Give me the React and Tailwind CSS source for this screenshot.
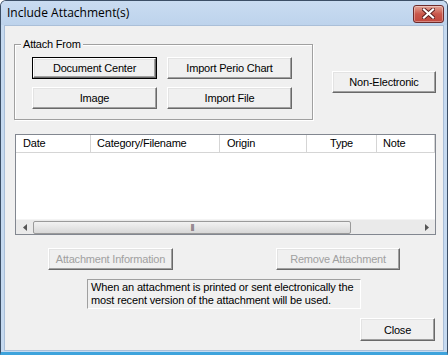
import React from "react";

const font = { fontFamily: '"Liberation Sans", Arial, sans-serif' };

const Btn = ({ children, className = "", disabled, isDefault }) => (
  <div className={`${isDefault ? "border border-black" : ""} ${className}`}>
    <div
      className={`w-full h-full flex items-center justify-center whitespace-nowrap bg-[#f0f0f0] border border-t-white border-l-white border-r-[#696969] border-b-[#696969] shadow-[inset_-1px_-1px_0_#a0a0a0,inset_1px_1px_0_#e3e3e3] text-[11px] tracking-[-0.2px] leading-none pt-[1px] ${disabled ? "text-[#a0a0a0]" : "text-black"}`}
    >
      {children}
    </div>
  </div>
);

const cols = [
  { label: "Date", w: "w-[75px]", align: "pl-[7px]" },
  { label: "Category/Filename", w: "w-[129px]", align: "pl-[6px]" },
  { label: "Origin", w: "w-[87px]", align: "pl-[7px]" },
  { label: "Type", w: "w-[70px]", align: "justify-center" },
  { label: "Note", w: "flex-1", align: "pl-[6px]" },
];

export default function App() {
  return (
    <div
      style={font}
      className="w-[448px] h-[355px] flex flex-col bg-[#c6daf0] border border-[#3c4f66] rounded-t-[6px] overflow-hidden border-b-[3px] border-b-[#3ea3dc]"
    >
      {/* title bar */}
      <div className="h-[24px] flex items-center justify-between pl-[6px] pr-[3px] bg-gradient-to-b from-[#c9dcf1] to-[#bdd3ec]">
        <span className="text-[12px] text-black" style={{ fontFamily: '"Open Sans", "Liberation Sans", sans-serif' }}>
          Include Attachment(s)
        </span>
        <div className="w-[31px] h-[18px] mt-[1px] rounded-[3px] border border-[#6d2b2b] bg-gradient-to-b from-[#e2a496] via-[#c9574b] to-[#c1473d] flex items-center justify-center shadow-[inset_0_0_0_1px_rgba(255,255,255,0.35)]">
          <svg width="13" height="11" viewBox="0 0 13 11">
            <path d="M2 1.5 L11 9.5 M11 1.5 L2 9.5" stroke="#5a1f1f" strokeWidth="4" strokeLinecap="square" />
            <path d="M2 1.5 L11 9.5 M11 1.5 L2 9.5" stroke="#fff" strokeWidth="2.2" strokeLinecap="square" />
          </svg>
        </div>
      </div>

      {/* client area */}
      <div className="flex-1 mx-[3px] mb-[1px] bg-[#f0f0f0] border border-[#aabfd8] pt-[18px]">
        <div className="flex items-start">
          {/* group box */}
          <div className="relative ml-[9px] w-[299px] h-[76px] border border-[#a0a0a0] shadow-[1px_1px_0_#fff,inset_1px_1px_0_#fff] pl-[17px] pt-[12px]">
            <span className="absolute -top-[8px] left-[6px] px-[2px] bg-[#f0f0f0] text-[11px] tracking-[-0.2px] leading-[14px] text-black">
              Attach From
            </span>
            <div className="grid grid-cols-[125px_125px] gap-x-[10px] gap-y-[8px]">
              <Btn isDefault className="h-[22px]">Document Center</Btn>
              <Btn className="h-[22px]">Import Perio Chart</Btn>
              <Btn className="h-[22px]">Image</Btn>
              <Btn className="h-[22px]">Import File</Btn>
            </div>
          </div>
          <Btn className="ml-[19px] mt-[27px] w-[104px] h-[22px]">Non-Electronic</Btn>
        </div>

        {/* list view */}
        <div className="mt-[14px] ml-[10px] w-[421px] h-[101px] bg-white border border-[#828790] flex flex-col">
          <div className="flex h-[18px] border-b border-[#d5d5d5] text-[11px] tracking-[-0.2px] text-black">
            {cols.map((c) => (
              <div key={c.label} className={`${c.w} flex items-center ${c.align} border-r border-[#d5d5d5]`}>
                {c.label}
              </div>
            ))}
          </div>
          <div className="flex-1" />
          <div className="h-[15px] flex items-center bg-[#eaeaea] border-t border-[#f4f4f4]">
            <div className="w-[17px] h-full flex items-center justify-center">
              <svg width="4" height="7" viewBox="0 0 4 7">
                <path d="M4 0 L0 3.5 L4 7 Z" fill="#555" />
              </svg>
            </div>
            <div className="w-[318px] h-[13px] rounded-[2px] border border-[#9a9a9a] bg-gradient-to-b from-[#f2f2f2] to-[#d8d8d8] flex items-center justify-center">
              <span className="text-[8px] tracking-[-1px] text-[#555] leading-none">|||</span>
            </div>
            <div className="flex-1" />
            <div className="w-[17px] h-full flex items-center justify-center">
              <svg width="4" height="7" viewBox="0 0 4 7">
                <path d="M0 0 L4 3.5 L0 7 Z" fill="#555" />
              </svg>
            </div>
          </div>
        </div>

        {/* action buttons */}
        <div className="flex mt-[13px]">
          <Btn disabled className="ml-[43px] w-[125px] h-[22px]">Attachment Information</Btn>
          <Btn disabled className="ml-[103px] w-[124px] h-[22px]">Remove Attachment</Btn>
        </div>

        {/* note */}
        <div className="mt-[9px] ml-[82px] w-[274px] h-[30px] border border-t-[#a0a0a0] border-l-[#a0a0a0] border-r-white border-b-white pl-[3px] pt-[1px] text-[11px] tracking-[-0.15px] leading-[13px] text-black whitespace-nowrap">
          When an attachment is printed or sent electronically the
          <br />
          most recent version of the attachment will be used.
        </div>

        <div className="flex">
          <Btn className="mt-[9px] ml-[355px] w-[75px] h-[23px]">Close</Btn>
        </div>
      </div>
    </div>
  );
}
